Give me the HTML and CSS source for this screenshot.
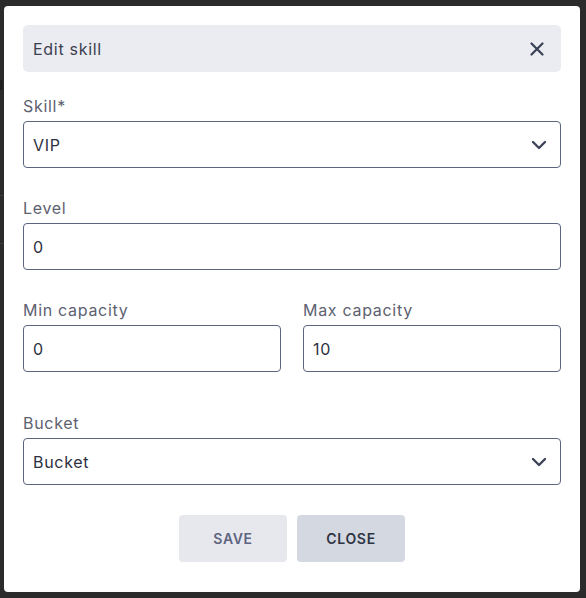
FILE: index.html
```html
<!DOCTYPE html>
<html lang="en">
<head>
<meta charset="utf-8">
<title>Edit skill</title>
<link rel="stylesheet" href="styles.css">
</head>
<body>
<div class="backdrop-mark"></div>
<div class="modal">
  <div class="modal-header">
    <span class="modal-title">Edit skill</span>
    <svg class="icon-close" width="14" height="14" viewBox="0 0 14 14" aria-hidden="true">
      <path d="M1.5 1.5 L12.5 12.5 M12.5 1.5 L1.5 12.5" stroke="#3a4157" stroke-width="2.2" stroke-linecap="round" fill="none"/>
    </svg>
  </div>
  <div class="form">
    <div class="field">
      <label class="label">Skill*</label>
      <div class="input select">
        <span>VIP</span>
        <svg class="chevron" width="16" height="10" viewBox="0 0 16 10" aria-hidden="true">
          <path d="M2 2 L8 8 L14 2" stroke="#3d4459" stroke-width="2.4" stroke-linecap="round" stroke-linejoin="round" fill="none"/>
        </svg>
      </div>
    </div>
    <div class="field">
      <label class="label">Level</label>
      <div class="input"><span>0</span></div>
    </div>
    <div class="row">
      <div class="field">
        <label class="label">Min capacity</label>
        <div class="input"><span>0</span></div>
      </div>
      <div class="field">
        <label class="label">Max capacity</label>
        <div class="input"><span>10</span></div>
      </div>
    </div>
    <div class="field field-bucket">
      <label class="label">Bucket</label>
      <div class="input select">
        <span>Bucket</span>
        <svg class="chevron" width="16" height="10" viewBox="0 0 16 10" aria-hidden="true">
          <path d="M2 2 L8 8 L14 2" stroke="#3d4459" stroke-width="2.4" stroke-linecap="round" stroke-linejoin="round" fill="none"/>
        </svg>
      </div>
    </div>
  </div>
  <div class="actions">
    <button class="btn btn-save">SAVE</button>
    <button class="btn btn-close">CLOSE</button>
  </div>
</div>
</body>
</html>
```

FILE: styles.css
```css
* { box-sizing: border-box; }

html, body {
  margin: 0;
  height: 100%;
}

body {
  background:
    linear-gradient(#3c3c3c, #3c3c3c) 0 195px / 4px 1px no-repeat,
    linear-gradient(#3c3c3c, #3c3c3c) 0 243px / 4px 1px no-repeat,
    #2b2b2b;
  padding: 6px 6px 6px 4px;
  font-family: "Inter", "DejaVu Sans", sans-serif;
  overflow: hidden;
}

.backdrop-mark {
  position: absolute;
  left: 0;
  top: 80px;
  width: 3px;
  height: 10px;
  background: #1f1f1f;
}

.modal {
  width: 576px;
  height: 586px;
  background: #ffffff;
  border-radius: 4px;
  padding: 19px 19px 30px;
  display: flex;
  flex-direction: column;
}

.modal-header {
  height: 47px;
  background: #ebecf1;
  border-radius: 5px;
  display: flex;
  align-items: center;
  justify-content: space-between;
  padding: 0 17px 0 10px;
}

.modal-title {
  font-size: 16px;
  color: #3b4050;
  letter-spacing: 0.7px;
}

.icon-close { display: block; }

.form {
  display: flex;
  flex-direction: column;
  padding-top: 24px;
}

.field {
  display: flex;
  flex-direction: column;
  gap: 5px;
  margin-bottom: 30px;
}

.field-bucket { margin-top: 11px; }

.label {
  font-size: 16px;
  line-height: 20px;
  color: #5d6170;
  letter-spacing: 0.7px;
}

.input {
  height: 47px;
  border: 1px solid #5c6580;
  border-radius: 4px;
  display: flex;
  align-items: center;
  justify-content: space-between;
  padding: 0 13px 0 9px;
  font-size: 16px;
  color: #2d3142;
  letter-spacing: 0.7px;
}

.chevron { display: block; }

.row {
  display: grid;
  grid-template-columns: 1fr 1fr;
  gap: 22px;
  margin-bottom: 30px;
}

.row .field { margin-bottom: 0; }

.actions {
  display: flex;
  justify-content: center;
  gap: 10px;
}

.btn {
  width: 108px;
  height: 47px;
  border: none;
  border-radius: 4px;
  font-family: "Inter", "DejaVu Sans", sans-serif;
  font-size: 14px;
  font-weight: 600;
  letter-spacing: 0.7px;
}

.btn-save {
  background: #e7e8ed;
  color: #5d6480;
}

.btn-close {
  background: #d4d8e0;
  color: #2f3444;
}
```
